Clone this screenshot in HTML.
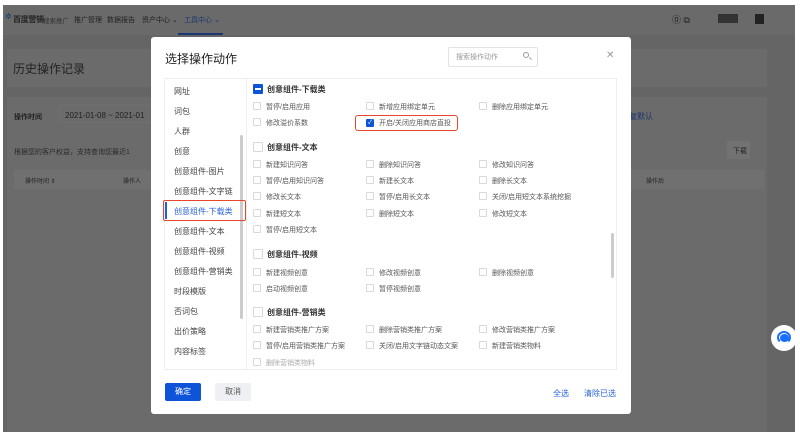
<!DOCTYPE html>
<html><head><meta charset="utf-8"><style>
*{margin:0;padding:0;box-sizing:border-box}
body{width:800px;height:437px;background:#fff;position:relative;overflow:hidden;font-family:"Liberation Sans","Noto Sans CJK SC",sans-serif;font-size:8px;color:#333}
.a{position:absolute;white-space:nowrap}
#bg{position:absolute;left:3px;top:5px;width:792px;height:427px;background:#656565;overflow:hidden}
.cb{position:absolute;width:8px;height:8px;border:1px solid #d9d9d9;border-radius:1px;background:#fff}
.it{position:absolute;font-size:7px;color:#555;white-space:nowrap}
.hd{position:absolute;font-size:8px;font-weight:bold;color:#333;white-space:nowrap}
.hcb{position:absolute;width:10px;height:10px;border:1px solid #d9d9d9;border-radius:1px;background:#fff}
.li{position:absolute;left:174px;font-size:8px;color:#444;white-space:nowrap}
.nv{position:absolute;top:10px;font-size:7px;color:#222;white-space:nowrap}
</style></head><body>
<div id="bg">
 <div class="a" style="left:0;top:0;width:792px;height:30px;background:#6a6a6a"></div>
 <div class="a" style="left:2px;top:7px;width:5px;height:9px;color:#1a3570;font-size:8px">✲</div>
 <div class="a" style="left:10px;top:9px;font-size:8px;font-weight:bold;color:#222;letter-spacing:-0.3px">百度营销</div>
 <div class="a" style="left:40px;top:10px;font-size:6.5px;color:#333">搜索推广</div>
 <div class="nv" style="left:71px">推广管理</div>
 <div class="nv" style="left:104px">数据报告</div>
 <div class="nv" style="left:139px">资产中心 ⌄</div>
 <div class="nv" style="left:181px;color:#1a3570">工具中心 ⌄</div>
 <div class="a" style="left:175px;top:28px;width:45px;height:2px;background:#1a3570"></div>
 <div class="a" style="left:669px;top:8px;font-size:9px;color:#222">⓪ ⧉</div>
 <div class="a" style="left:715px;top:9px;width:20px;height:9px;background:#333"></div>
 <div class="a" style="left:752px;top:9px;width:9px;height:10px;background:#222"></div>
 <div class="a" style="left:4px;top:44px;width:760px;height:38px;background:#6b6b6b"></div>
 <div class="a" style="left:10px;top:55px;font-size:12px;color:#222">历史操作记录</div>
 <div class="a" style="left:4px;top:92px;width:760px;height:340px;background:#6b6b6b"></div>
 <div class="a" style="left:11px;top:107px;font-size:7px;color:#222;font-weight:bold">操作时间</div>
 <div class="a" style="left:56px;top:100px;width:100px;height:18px;border:1px solid #707070"></div>
 <div class="a" style="left:62px;top:106px;font-size:8px;color:#222">2021-01-08 ~ 2021-01</div>
 <div class="a" style="left:618px;top:106px;font-size:8px;color:#1a3570">恢复默认</div>
 <div class="a" style="left:11px;top:142px;font-size:7px;color:#2a2a2a">根据您的客户权益，支持查询您最近1</div>
 <div class="a" style="left:724px;top:136px;width:23px;height:18px;background:#727272"></div>
 <div class="a" style="left:730px;top:141px;font-size:7px;color:#222">下载</div>
 <div class="a" style="left:11px;top:165px;width:750px;height:19px;background:#707070"></div>
 <div class="a" style="left:22px;top:171px;font-size:6px;color:#222">操作时间 ⇕</div>
 <div class="a" style="left:120px;top:171px;font-size:6px;color:#222">操作人</div>
 <div class="a" style="left:643px;top:171px;font-size:6px;color:#222">操作后</div>
 <div class="a" style="left:768px;top:320px;width:26px;height:26px;border-radius:50%;background:#fff"></div>
 <div class="a" style="left:774px;top:326px;width:14px;height:13px;border-radius:50%;border:2px solid #1a6dff;border-bottom-color:transparent"></div>
 <div class="a" style="left:777px;top:329px;width:9px;height:8px;border-radius:50%;background:#1a6dff"></div>
</div>

<div class="a" style="left:151px;top:37px;width:480px;height:377px;background:#fff;border-radius:3px"></div>
<div class="a" style="left:165px;top:50px;font-size:12px;color:#222">选择操作动作</div>
<div class="a" style="left:448px;top:47px;width:90px;height:20px;border:1px solid #e3e3e3;border-radius:2px"></div>
<div class="a" style="left:456px;top:52px;font-size:7px;color:#999">搜索操作动作</div>
<div class="a" style="left:523px;top:52px;width:6px;height:6px;border:1px solid #999;border-radius:50%"></div>
<div class="a" style="left:529px;top:58px;width:3px;height:1px;background:#999;transform:rotate(45deg)"></div>
<div class="a" style="left:606px;top:50px;font-size:10px;color:#999">✕</div>

<div class="a" style="left:164px;top:78px;width:453px;height:292px;border:1px solid #eee"></div>
<div class="a" style="left:246px;top:78px;width:1px;height:292px;background:#eee"></div>
<div class="a" style="left:240px;top:135px;width:3px;height:184px;background:#ccc;border-radius:2px"></div>
<div class="a" style="left:611px;top:233px;width:3px;height:45px;background:#ccc;border-radius:2px"></div>

<div class="li" style="top:86px">网址</div>
<div class="li" style="top:106px">词包</div>
<div class="li" style="top:126px">人群</div>
<div class="li" style="top:146px">创意</div>
<div class="li" style="top:166px">创意组件-图片</div>
<div class="li" style="top:186px">创意组件-文字链</div>
<div class="a" style="left:163px;top:200px;width:83px;height:21px;border:1.5px solid #e8462a;border-radius:2px"></div>
<div class="a" style="left:165px;top:202px;width:1.5px;height:17px;background:#1f5fe0"></div>
<div class="li" style="top:206px;color:#2a62d8">创意组件-下载类</div>
<div class="li" style="top:226px">创意组件-文本</div>
<div class="li" style="top:246px">创意组件-视频</div>
<div class="li" style="top:266px">创意组件-营销类</div>
<div class="li" style="top:286px">时段模版</div>
<div class="li" style="top:306px">否词包</div>
<div class="li" style="top:326px">出价策略</div>
<div class="li" style="top:346px">内容标签</div>

<div class="hcb" style="left:253px;top:84px;background:#0d54d8;border-color:#0d54d8"></div>
<div class="a" style="left:255px;top:88px;width:6px;height:1.5px;background:#fff"></div>
<div class="hd" style="left:267px;top:84px">创意组件-下载类</div>
<div class="cb" style="left:253px;top:102px"></div><div class="it" style="left:266px;top:102px">暂停/启用应用</div>
<div class="cb" style="left:366px;top:102px"></div><div class="it" style="left:379px;top:102px">新增应用绑定单元</div>
<div class="cb" style="left:479px;top:102px"></div><div class="it" style="left:492px;top:102px">删除应用绑定单元</div>
<div class="cb" style="left:253px;top:118px"></div><div class="it" style="left:266px;top:118px">修改溢价系数</div>
<div class="a" style="left:355px;top:115px;width:103px;height:16px;border:1.5px solid #e8462a;border-radius:3px"></div>
<div class="cb" style="left:366px;top:119px;background:#0d54d8;border-color:#0d54d8;color:#fff;font-size:6px;line-height:6px;text-align:center">✓</div>
<div class="it" style="left:379px;top:118px">开启/关闭应用商店直投</div>

<div class="hcb" style="left:253px;top:142px"></div><div class="hd" style="left:267px;top:142px">创意组件-文本</div>
<div class="cb" style="left:253px;top:160px"></div><div class="it" style="left:266px;top:160px">新建知识问答</div>
<div class="cb" style="left:366px;top:160px"></div><div class="it" style="left:379px;top:160px">删除知识问答</div>
<div class="cb" style="left:479px;top:160px"></div><div class="it" style="left:492px;top:160px">修改知识问答</div>
<div class="cb" style="left:253px;top:176px"></div><div class="it" style="left:266px;top:176px">暂停/启用知识问答</div>
<div class="cb" style="left:366px;top:176px"></div><div class="it" style="left:379px;top:176px">新建长文本</div>
<div class="cb" style="left:479px;top:176px"></div><div class="it" style="left:492px;top:176px">删除长文本</div>
<div class="cb" style="left:253px;top:192px"></div><div class="it" style="left:266px;top:192px">修改长文本</div>
<div class="cb" style="left:366px;top:192px"></div><div class="it" style="left:379px;top:192px">暂停/启用长文本</div>
<div class="cb" style="left:479px;top:192px"></div><div class="it" style="left:492px;top:192px">关闭/启用短文本系统挖掘</div>
<div class="cb" style="left:253px;top:209px"></div><div class="it" style="left:266px;top:209px">新建短文本</div>
<div class="cb" style="left:366px;top:209px"></div><div class="it" style="left:379px;top:209px">删除短文本</div>
<div class="cb" style="left:479px;top:209px"></div><div class="it" style="left:492px;top:209px">修改短文本</div>
<div class="cb" style="left:253px;top:225px"></div><div class="it" style="left:266px;top:225px">暂停/启用短文本</div>

<div class="hcb" style="left:253px;top:249px"></div><div class="hd" style="left:267px;top:249px">创意组件-视频</div>
<div class="cb" style="left:253px;top:268px"></div><div class="it" style="left:266px;top:268px">新建视频创意</div>
<div class="cb" style="left:366px;top:268px"></div><div class="it" style="left:379px;top:268px">修改视频创意</div>
<div class="cb" style="left:479px;top:268px"></div><div class="it" style="left:492px;top:268px">删除视频创意</div>
<div class="cb" style="left:253px;top:284px"></div><div class="it" style="left:266px;top:284px">启动视频创意</div>
<div class="cb" style="left:366px;top:284px"></div><div class="it" style="left:379px;top:284px">暂停视频创意</div>

<div class="hcb" style="left:253px;top:307px"></div><div class="hd" style="left:267px;top:307px">创意组件-营销类</div>
<div class="cb" style="left:253px;top:325px"></div><div class="it" style="left:266px;top:325px">新建营销类推广方案</div>
<div class="cb" style="left:366px;top:325px"></div><div class="it" style="left:379px;top:325px">删除营销类推广方案</div>
<div class="cb" style="left:479px;top:325px"></div><div class="it" style="left:492px;top:325px">修改营销类推广方案</div>
<div class="cb" style="left:253px;top:341px"></div><div class="it" style="left:266px;top:341px">暂停/启用营销类推广方案</div>
<div class="cb" style="left:366px;top:341px"></div><div class="it" style="left:379px;top:341px">关闭/启用文字链动态文案</div>
<div class="cb" style="left:479px;top:341px"></div><div class="it" style="left:492px;top:341px">新建营销类物料</div>
<div class="a" style="left:253px;top:357px;width:150px;height:12px;overflow:hidden"><div class="cb" style="left:0;top:1px"></div><div class="it" style="left:13px;top:1px;color:#aaa">删除营销类物料</div></div>

<div class="a" style="left:165px;top:383px;width:36px;height:18px;background:#0d54d8;border-radius:2px;color:#fff;font-size:8px;text-align:center;line-height:18px">确定</div>
<div class="a" style="left:215px;top:383px;width:36px;height:18px;background:#eef0f3;border-radius:2px;color:#555;font-size:8px;text-align:center;line-height:18px">取消</div>
<div class="a" style="left:553px;top:388px;font-size:8px;color:#2a62d8">全选</div>
<div class="a" style="left:584px;top:388px;font-size:8px;color:#2a62d8">清除已选</div>
</body></html>
